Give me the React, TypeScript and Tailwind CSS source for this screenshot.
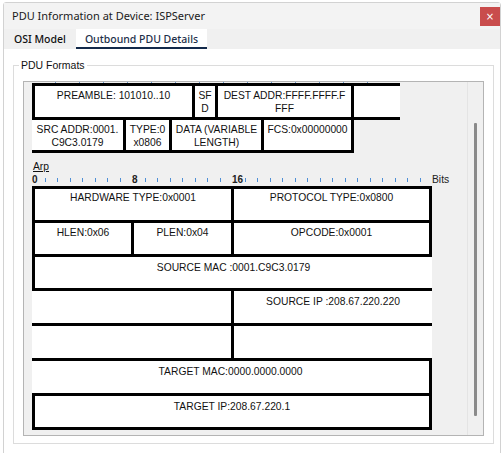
import React from "react";

const cellFont = "font-['Liberation_Sans',Arial,sans-serif] text-[10.3px] leading-[13px] text-[#111]";

function Ruler() {
  const slots = Array.from({ length: 32 }, (_, i) => i);
  return (
    <div className="flex items-end h-[13px]">
      <div className="grid grid-cols-[repeat(32,12.5px)] items-end">
        {slots.map((i) =>
          i % 8 === 0 && i !== 24 ? (
            <div key={i} className="h-[13px] overflow-visible whitespace-nowrap font-['Liberation_Sans',Arial,sans-serif] text-[10px] leading-[13px] font-bold text-[#222]">
              {i}
            </div>
          ) : (
            <div key={i} className="h-[13px] flex items-end">
              <div className="w-[1px] h-[4px] bg-[#4f8fd6] mb-[4px]" />
            </div>
          )
        )}
      </div>
      <div className="font-['Liberation_Sans',Arial,sans-serif] text-[10.3px] leading-[13px] text-[#222]">Bits</div>
    </div>
  );
}

function Cell({ className, children }: { className?: string; children?: React.ReactNode }) {
  return <div className={`bg-white text-center ${cellFont} ${className ?? ""}`}>{children}</div>;
}

export default function App() {
  return (
    <div className="w-[503px] h-[453px] bg-white overflow-hidden">
      <div className="ml-[3px] mt-[2px] w-[498px] h-[470px] border border-[#d2d2d2] rounded-t-[3px] bg-white flex flex-col">
        {/* title bar */}
        <div className="h-[26px] bg-[#f3f3f3] flex items-start justify-between">
          <div className="pl-[8px] pt-[6px] font-['Noto_Sans',sans-serif] text-[11px] leading-[14px] text-[#1a1a1a]">
            PDU Information at Device: ISPServer
          </div>
          <div className="mt-[4px] w-[20px] h-[19px] bg-[#c94c4c] flex items-center justify-center text-white text-[10px] leading-none font-['DejaVu_Sans',sans-serif]">
            ×
          </div>
        </div>
        {/* tabs */}
        <div className="h-[20px] bg-[#f0f0f0] flex items-stretch font-['Noto_Sans',sans-serif] text-[10.5px] font-medium text-[#111]">
          <div className="pl-[10px] pr-[10px] pt-[3px] leading-[14px]">OSI Model</div>
          <div className="bg-white px-[9px] pt-[3px] leading-[14px] border-b-[2px] border-[#12294a] text-[#1d2f4a]">
            Outbound PDU Details
          </div>
        </div>
        {/* content */}
        <div className="pl-[9px] pr-[6px] pt-[16px]">
          <div className="relative border border-[#dcdcdc] h-[379px] pt-[15px] px-[9px]">
            <div className="absolute -top-[8px] left-[5px] bg-white px-[2px] font-['Liberation_Sans',Arial,sans-serif] text-[10.5px] leading-[14px] text-[#111]">
              PDU Formats
            </div>
            {/* scroll panel */}
            <div className="h-[355px] border border-[#b4b4b4] bg-[#f0f0f0] flex overflow-hidden">
              <div className="flex-1 pl-[8px] overflow-hidden">
                {/* clipped ruler ticks */}
                <div className="h-[1px] flex gap-[23px] pl-[23px]">
                  {Array.from({ length: 14 }, (_, i) => (
                    <div key={i} className="w-[1px] h-[1px] bg-[#6a9ad0]" />
                  ))}
                </div>
                {/* Ethernet frame */}
                <div className="w-[368px]">
                  <div className="flex border-t-[3px] border-b-[3px] border-black h-[37px]">
                    <Cell className="w-[163px] border-l-[3px] border-r-[3px] border-black pt-[3px]">PREAMBLE: 101010..10</Cell>
                    <Cell className="w-[23px] border-r-[3px] border-black pt-[3px] px-[2px] break-all">SFD</Cell>
                    <Cell className="w-[136px] border-r-[3px] border-black pt-[3px] px-[3px] break-all">DEST ADDR:FFFF.FFFF.FFFF</Cell>
                    <Cell className="flex-1" />
                  </div>
                  <div className="flex h-[33px]">
                    <Cell className="w-[94px] border-r-[3px] border-b-[3px] border-black pt-[3px] px-[2px]">SRC ADDR:0001. C9C3.0179</Cell>
                    <Cell className="w-[46px] border-r-[3px] border-b-[3px] border-black pt-[3px] px-[2px] break-all">TYPE:0x0806</Cell>
                    <Cell className="w-[92px] border-r-[3px] border-b-[3px] border-black pt-[3px] px-[2px]">DATA (VARIABLE LENGTH)</Cell>
                    <Cell className="w-[90px] border-r-[3px] border-b-[3px] border-black pt-[3px] px-[2px]">FCS:0x00000000</Cell>
                  </div>
                </div>
                {/* ARP */}
                <div className="mt-[7px] font-['Liberation_Sans',Arial,sans-serif] text-[10.3px] leading-[13px] text-[#111] underline pl-[1px]">
                  Arp
                </div>
                <Ruler />
                <div className="w-[400px] border-t-[3px] border-black">
                  <div className="flex h-[34px] border-b-[3px] border-black">
                    <Cell className="w-[202px] border-l-[3px] border-r-[3px] border-black pt-[2px]">HARDWARE TYPE:0x0001</Cell>
                    <Cell className="flex-1 border-r-[3px] border-black pt-[2px]">PROTOCOL TYPE:0x0800</Cell>
                  </div>
                  <div className="flex h-[34px] border-b-[3px] border-black">
                    <Cell className="w-[102px] border-l-[3px] border-r-[3px] border-black pt-[3px]">HLEN:0x06</Cell>
                    <Cell className="w-[100px] border-r-[3px] border-black pt-[3px]">PLEN:0x04</Cell>
                    <Cell className="flex-1 border-r-[3px] border-black pt-[3px]">OPCODE:0x0001</Cell>
                  </div>
                  <div className="flex h-[34px] border-b-[3px] border-black">
                    <Cell className="flex-1 border-l-[3px] border-black pt-[4px]">SOURCE MAC :0001.C9C3.0179</Cell>
                  </div>
                  <div className="flex h-[35px] border-b-[3px] border-black">
                    <Cell className="w-[202px] border-r-[3px] border-black" />
                    <Cell className="flex-1 pt-[4px]">SOURCE IP :208.67.220.220</Cell>
                  </div>
                  <div className="flex h-[35px] border-b-[3px] border-black">
                    <Cell className="w-[202px] border-r-[3px] border-black" />
                    <Cell className="flex-1" />
                  </div>
                  <div className="flex h-[35px] border-b-[3px] border-black">
                    <Cell className="flex-1 border-r-[3px] border-black pt-[4px]">TARGET MAC:0000.0000.0000</Cell>
                  </div>
                  <div className="flex h-[34px] border-b-[3px] border-black">
                    <Cell className="flex-1 border-l-[3px] border-r-[3px] border-black pt-[4px]">TARGET IP:208.67.220.1</Cell>
                  </div>
                </div>
              </div>
              {/* scrollbar */}
              <div className="w-[16px] border-l border-[#e4e4e4] flex justify-center pt-[41px]">
                <div className="w-[3px] h-[293px] bg-[#8a8a8a] rounded-[1px]" />
              </div>
            </div>
          </div>
        </div>
      </div>
    </div>
  );
}
